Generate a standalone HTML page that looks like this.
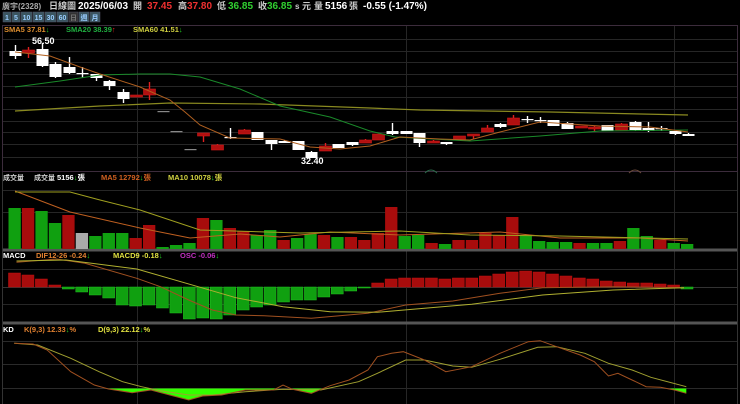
<!DOCTYPE html>
<html><head><meta charset="utf-8"><style>
html,body{margin:0;padding:0;background:#000;width:740px;height:404px;overflow:hidden}
svg{display:block}
text{font-family:"Liberation Sans","Noto Sans CJK TC",sans-serif;font-weight:bold}
</style></head><body>
<svg id="s" width="740" height="404" viewBox="0 0 740 404" xmlns="http://www.w3.org/2000/svg">
<rect width="740" height="404" fill="#000"/>
<g font-size="10">
<text x="2" y="9" fill="#aaa" font-size="8" font-weight="normal">廣宇(2328)</text>
<text x="49" y="9" fill="#ccc" font-size="9" font-weight="normal">日線圖</text>
<text x="78" y="9" fill="#fff">2025/06/03</text>
<text x="133" y="9" fill="#ccc" font-size="9" font-weight="normal">開</text><text x="147" y="9" fill="#f03030">37.45</text>
<text x="178" y="9" fill="#ccc" font-size="9" font-weight="normal">高</text><text x="187" y="9" fill="#f03030">37.80</text>
<text x="217" y="9" fill="#ccc" font-size="9" font-weight="normal">低</text><text x="228" y="9" fill="#30d030">36.85</text>
<text x="258" y="9" fill="#ccc" font-size="9" font-weight="normal">收</text><text x="267" y="9" fill="#30d030">36.85</text>
<text x="295" y="9" fill="#ccc" font-size="8">s</text><text x="302" y="9" fill="#ccc" font-size="9" font-weight="normal">元</text>
<text x="314" y="9" fill="#ccc" font-size="9" font-weight="normal">量</text><text x="325" y="9" fill="#fff">5156</text>
<text x="349" y="9" fill="#ccc" font-size="9" font-weight="normal">張</text>
<text x="363" y="9" fill="#fff">-0.55 (-1.47%)</text>
</g>
<g id="btn"></g>
<g id="g"></g>
</svg>
<script>
var NS="http://www.w3.org/2000/svg",G=document.getElementById('g');
function el(t,a,p){var e=document.createElementNS(NS,t);for(var k in a)e.setAttribute(k,a[k]);(p||G).appendChild(e);return e}
function tx(x,y,s,c,fs,ac){var e=el('text',{x:x,y:y,fill:c,'font-size':fs||8});
var parts=s.split(/([↓↑])/);parts.forEach(function(p){var t=el('tspan',{},e);if(p=="↓")t.setAttribute('fill','#20d020');else if(p=="↑")t.setAttribute('fill','#f02020');t.textContent=p;});return e}
var bl=[["1",3,8],["5",12,8],["10",21,11],["15",33,11],["30",45,11],["60",57,11],["日",69,9],["週",79,10],["月",90,10]];
var B=document.getElementById('btn');
bl.forEach(function(b){el('rect',{x:b[1],y:12,width:b[2],height:10,fill:b[0]=="日"?"#333":"#3a5560",stroke:"#556",'stroke-width':0.5},B);
var t=el('text',{x:b[1]+b[2]/2,y:20,fill:b[0]=="日"?"#777":"#9cf",'font-size':7,'text-anchor':'middle'},B);t.textContent=b[0];});
function hl(y,c,w){el('line',{x1:3,x2:737,y1:y,y2:y,stroke:c,'stroke-width':w||1})}
[39,51,62,74,86,97,109,121,132,144,157].forEach(function(y){hl(y+.5,"#262626")});
[212,190].forEach(function(y){hl(y+.5,"#262626")});
[269,304].forEach(function(y){hl(y+.5,"#262626")});
hl(287.5,"#333");
[341,364,388].forEach(function(y){hl(y+.5,"#2a2a2a")});
[137,406,674].forEach(function(x){el('line',{x1:x+.5,x2:x+.5,y1:26,y2:404,stroke:"#262626"})});
el('rect',{x:2.5,y:25.5,width:735,height:146,fill:"none",stroke:"#3c2c3c"});
el('line',{x1:2.5,x2:2.5,y1:172,y2:404,stroke:"#333"});
el('line',{x1:737.5,x2:737.5,y1:172,y2:404,stroke:"#333"});
hl(250,"#555",3);hl(323,"#555",3);
var C=[[15,51,56,'w',45,59],[28,50,53,'r',47,58],[42,49,66,'w',43,67],[55,64,77,'w',62,78],[69,67,73,'w',57,74],[82,73,74,'w',67,78],[96,74,78,'w',74,81],[109,81,86,'w',80,90],[123,92,99,'w',89,103],[136,95,97,'r',95,97],[149,89,95,'r',82,100],[163,111,111,'g',111,111],[176,131,131,'g',131,131],[190,149,149,'g',149,149],[203,133,136,'r',133,142],[217,145,150,'r',144,150],[230,137,138,'w',128,139],[244,130,134,'r',129,134],[257,132,140,'w',132,140],[271,140,144,'w',140,150],[284,141,143,'w',140,143],[298,141,150,'w',141,150],[311,152,158,'w',151,158],[325,146,151,'r',143,151],[338,144,148,'w',144,148],[352,142,145,'w',142,146],[365,140,143,'r',139,143],[378,134,140,'r',134,140],[392,131,134,'w',123,135],[406,131,134,'w',131,134],[419,133,143,'w',133,147],[433,141,143,'r',140,143],[446,142,144,'w',142,145],[459,136,140,'r',136,140],[473,134,136,'r',134,139],[487,128,132,'r',125,132],[500,124,127,'w',123,128],[513,118,125,'r',115,125],[527,119,120,'w',116,123],[540,120,121,'w',117,123],[553,120,126,'w',120,126],[567,123,129,'w',122,129],[581,126,128,'r',126,128],[594,127,129,'r',126,132],[607,125,131,'w',125,131],[621,124,130,'r',123,130],[635,122,130,'w',121,131],[648,128,131,'w',122,132],[661,128,129,'w',126,131],[675,131,134,'w',131,135],[688,134,136,'w',133,136]];
C.forEach(function(c){var col=c[3]=='w'?'#fff':c[3]=='r'?'#b01010':'#888';
if(c[4]<c[1]||c[5]>c[2])el('line',{x1:c[0]+.5,x2:c[0]+.5,y1:c[4],y2:c[5],stroke:c[3]=='r'?'#e02020':col,'stroke-width':1.4});
var h=Math.max(c[2]-c[1],1.2);el('rect',{x:c[0]-5.5,y:c[1],width:12,height:h,fill:col,stroke:c[3]=='r'?'#d01818':'none','stroke-width':.6});});
function pl(pts,c,w,dx,sx,sy,dy){var s=pts.map(function(p){return ((p[0]/(sx||1))+(dx||0)).toFixed(1)+','+((p[1]/(sy||1))+(dy||0)).toFixed(1)}).join(' ');return el('polyline',{points:s,fill:'none',stroke:c,'stroke-width':w||1})}
pl([[15,111],[100,106],[170,103],[260,104],[370,108],[420,110],[550,112],[688,115]],"#8a8a20",1.2);
pl([[15,87],[60,81],[100,75],[140,74],[170,74],[200,77],[240,89],[280,106],[330,117],[370,131],[395,137],[470,141],[540,136],[600,131],[688,130]],"#1a8a2a",1);
pl([[15,52],[50,56],[80,67],[100,74],[140,87],[170,100],[185,112],[200,125],[230,138],[280,139],[310,147],[340,149],[370,146],[400,137],[440,139],[470,140],[500,132],[540,122],[600,126],[650,127],[688,132]],"#b06020",1);
tx(32,44,"56.50","#fff",9);tx(301,164,"32.40","#fff",9);
tx(4,32,"SMA5 37.81↓","#e09030",7.5);tx(66,32,"SMA20 38.39↑","#20b040",7.5);tx(133,32,"SMA60 41.51↓","#d0d040",7.5);
el('path',{d:"M425,173 q6,-6 12,0",stroke:"#2a6a4a",fill:"none"});el('path',{d:"M629,173 q6,-6 12,0",stroke:"#6a4a3a",fill:"none"});
var V=[['g',208],['r',208],['g',211],['g',223],['r',215],['s',233],['g',236],['g',233],['g',233],['r',238],['r',225],['g',247],['g',245],['g',243],['r',218],['g',220],['r',228],['r',231],['g',235],['g',230],['r',240],['g',238],['g',234],['r',235],['g',237],['r',237],['r',240],['r',233],['r',207],['g',236],['g',235],['r',243],['g',244],['r',240],['r',240],['r',233],['r',235],['r',217],['g',235],['g',241],['g',242],['g',242],['r',243],['g',243],['g',243],['r',241],['g',228],['g',236],['r',240],['g',243],['g',244]];
V.forEach(function(v,i){var x=8.5+i*13.45;var col=v[0]=='g'?'#10a010':v[0]=='r'?'#a80c0c':'#aaa';el('rect',{x:x,y:v[1],width:12.3,height:249-v[1],fill:col})});
pl([[15,191],[70,212],[140,228],[190,238],[240,234],[280,237],[330,232],[400,235],[500,232],[560,238],[640,238],[688,241]],"#c06020",1);
pl([[15,192],[70,192],[100,200],[140,210],[200,230],[300,233],[400,231],[470,235],[560,236],[688,239]],"#a0a020",1);
tx(3,180,"成交量","#ccc",7);tx(34,180,"成交量","#ccc",7);tx(57,180,"5156↓張","#fff",7.5);tx(101,180,"MA5 12792↓張","#d06020",7.5);tx(168,180,"MA10 10078↓張","#d0d040",7.5);
var M=[273,275,279,285,289,292,295,298,305,306,305,308,313,319,318,319,315,310,307,305,302,300,300,297,294,291,288,283,279,278,278,278,279,278,278,276,274,272,271,272,274,276,278,279,281,282,283,283,284,285,289];
M.forEach(function(m,i){var x=8.5+i*13.45;var up=m<287;el('rect',{x:x,y:up?m:287,width:12,height:Math.max(Math.abs(m-287),1),fill:up?'#a80c0c':'#10a010',stroke:up?'#c01010':'#20c020','stroke-width':.5})});
pl([[35,52],[120,42],[180,55],[290,100],[340,125],[400,165],[450,195],[500,210],[560,212],[660,220],[780,205],[860,180],[960,168],[1060,145],[1150,128],[1300,125],[1450,128]],"#a05020",1,0,2.12,3,245);
pl([[35,48],[140,45],[290,72],[420,125],[500,158],[600,185],[700,200],[800,202],[900,190],[1000,178],[1150,150],[1300,135],[1450,128]],"#b0b030",1,0,2.12,3,245);
tx(3,258,"MACD","#fff",7.5);tx(36,258,"DIF12-26 -0.24↓","#e08030",7.5);tx(113,258,"MACD9 -0.18↓","#e0e040",7.5);tx(180,258,"OSC -0.06↓","#c030c0",7.5);
var K=[[30,70],[70,72],[100,90],[150,155],[200,195],[230,207],[280,218],[320,210],[360,225],[400,240],[430,228],[470,225],[520,210],[580,210],[600,195],[620,208],[660,220],[700,197],[740,180],[780,150],[800,110],[830,100],[855,95],[900,120],[945,155],[1000,140],[1060,100],[1120,65],[1145,62],[1180,80],[1230,105],[1260,125],[1290,168],[1310,160],[1340,180],[1370,200],[1400,202],[1430,210],[1455,220]];
var cp=el('clipPath',{id:'cb'});el('rect',{x:0,y:388.5,width:740,height:20},cp);
var kp=K.map(function(p){return (p[0]/2.12).toFixed(1)+','+(320+p[1]/3).toFixed(1)}).join(' ');
el('polygon',{points:(30/2.12)+',388.5 '+kp+' '+(1455/2.12)+',388.5',fill:'#33ff00','clip-path':'url(#cb)'});
pl([[30,70],[80,75],[150,115],[210,155],[260,185],[300,200],[340,212],[400,225],[450,225],[520,215],[600,208],[680,210],[760,185],[800,160],[860,120],[900,120],[960,138],[1000,142],[1060,118],[1140,82],[1180,80],[1240,100],[1290,130],[1340,150],[1380,172],[1455,200]],"#a0a030",1,0,2.12,3,320);
pl(K,"#a05020",1,0,2.12,3,320);
tx(3,332,"KD","#fff",7.5);tx(24,332,"K(9,3) 12.33↓%","#e08030",7.5);tx(98,332,"D(9,3) 22.12↓%","#e0e040",7.5);
</script>
</body></html>
